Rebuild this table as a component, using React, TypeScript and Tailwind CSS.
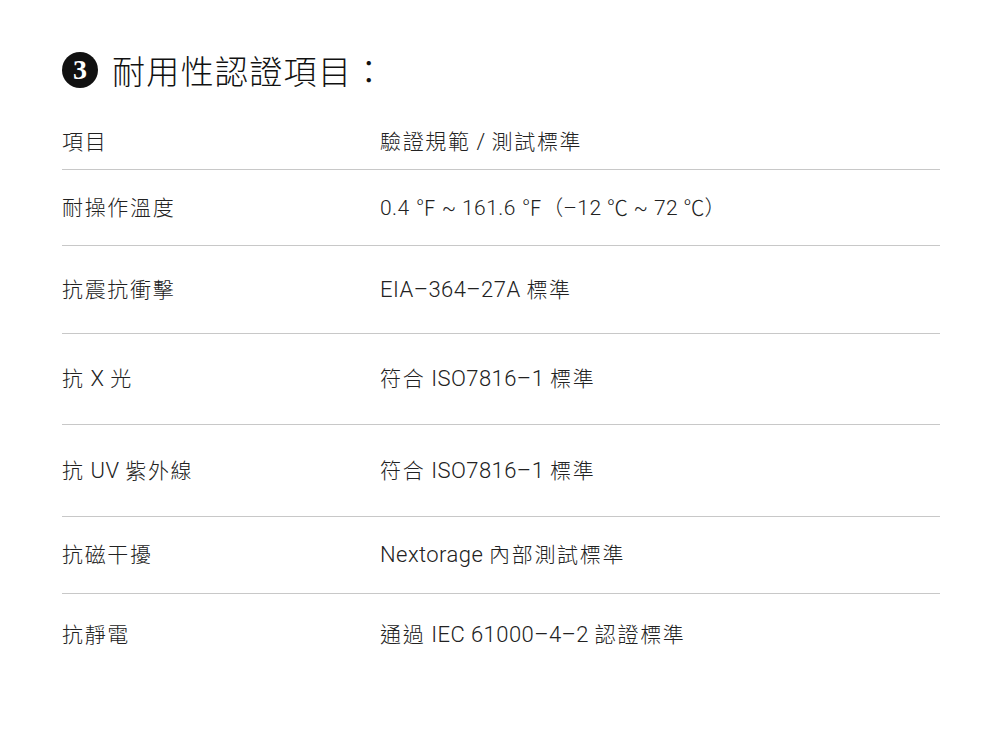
import React from 'react';

const rows = [
  { item: '耐操作溫度', spec: '0.4 ℉ ~ 161.6 ℉（–12 ℃ ~ 72 ℃）', h: 'h-[76px]', tight: true },
  { item: '抗震抗衝擊', spec: 'EIA–364–27A 標準', h: 'h-[88px]' },
  { item: '抗 X 光', spec: '符合 ISO7816–1 標準', h: 'h-[91px]' },
  { item: '抗 UV 紫外線', spec: '符合 ISO7816–1 標準', h: 'h-[92px]' },
  { item: '抗磁干擾', spec: 'Nextorage 內部測試標準', h: 'h-[77px]' },
  { item: '抗靜電', spec: '通過 IEC 61000–4–2 認證標準', h: 'h-[82px]' },
];

const CJK = /([\u2100-\u214f\u3000-\u9fff\uff00-\uffef]+)/;

// CJK runs get a bit of letter spacing, latin runs are set slightly larger
const Mixed = ({ text, tight }: { text: string; tight?: boolean }) => {
  const parts = text.split(CJK).filter(Boolean);
  return (
    <>
      {parts.map((p, i) =>
        CJK.test(p) ? (
          <span
            key={i}
            className={tight ? 'text-[21px] tracking-normal' : 'text-[21px] tracking-[0.08em]'}
            style={{ fontFamily: '"Noto Sans CJK TC", sans-serif' }}
          >
            {p}
          </span>
        ) : (
          <span key={i} className={tight ? 'text-[21px] tracking-[0.02em]' : 'text-[22px] tracking-[0.02em]'}>{p}</span>
        )
      )}
    </>
  );
};

const App = () => {
  return (
    <div
      className="w-[1000px] h-[735px] bg-white text-[#222] px-[62px] pt-[52px] font-light"
      style={{ fontFamily: 'Roboto, "Noto Sans CJK TC", sans-serif' }}
    >
      {/* Title */}
      <div className="flex items-center gap-[14px] h-[36px]">
        <div className="w-[36px] h-[36px] rounded-full bg-[#111] flex items-center justify-center">
          <span className="text-white text-[28px] leading-none font-bold" style={{ fontFamily: '"Liberation Serif", serif' }}>3</span>
        </div>
        <h2 className="text-[33px] leading-none tracking-[0.04em] text-[#111] font-light" style={{ fontFamily: '"Noto Sans CJK TC", sans-serif' }}>
          耐用性認證項目：
        </h2>
      </div>

      {/* Table */}
      <div className="mt-[34px] w-[878px] text-[21px]">
        <div className="flex items-start pt-[3px] h-[48px] border-b border-[#c8c8c8]">
          <div className="w-[318px]"><Mixed text="項目" /></div>
          <div><Mixed text="驗證規範 / 測試標準" /></div>
        </div>
        {rows.map((r, i) => (
          <div
            key={i}
            className={`flex items-center ${r.h} ${i < rows.length - 1 ? 'border-b border-[#c8c8c8]' : ''}`}
          >
            <div className="w-[318px]"><Mixed text={r.item} /></div>
            <div><Mixed text={r.spec} tight={r.tight} /></div>
          </div>
        ))}
      </div>
    </div>
  );
};

export default App;
